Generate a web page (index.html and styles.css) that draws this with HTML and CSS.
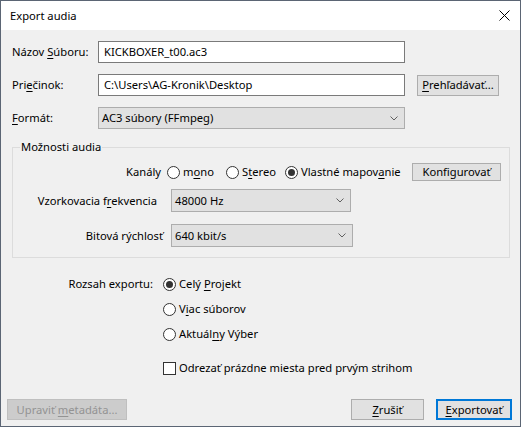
FILE: index.html
```html
<!DOCTYPE html>
<html lang="sk">
<head>
<meta charset="utf-8">
<title>Export audia</title>
<link rel="stylesheet" href="styles.css">
</head>
<body>
<div class="window">
  <div class="titlebar">
    <span class="title">Export audia</span>
    <svg class="close" width="11" height="11" viewBox="0 0 11 11"><path d="M0.5 0.5 L10.5 10.5 M10.5 0.5 L0.5 10.5" stroke="#000" stroke-width="1" fill="none"/></svg>
  </div>
  <div class="content">
    <div class="file-grid">
      <span class="lbl">Názov <u>S</u>úboru:</span>
      <div class="input">KICKBOXER_t00.ac3</div>
      <span></span>
      <span class="lbl">Pri<u>e</u>činok:</span>
      <div class="input">C:\Users\AG-Kronik\Desktop</div>
      <button class="btn"><u>P</u>rehľadávať...</button>
      <span class="lbl"><u>F</u>ormát:</span>
      <div class="select"><span>AC3 súbory (FFmpeg)</span><svg class="chev" width="8" height="5" viewBox="0 0 8 5"><path d="M0.5 0.5 L4 4 L7.5 0.5" stroke="#606060" fill="none"/></svg></div>
    </div>

    <div class="group">
      <div class="group-title">Možnosti audia</div>
      <div class="grow grow-ch">
        <span class="glbl glbl-ch">Kanály</span>
        <div class="radios">
          <span class="ritem ritem-mono"><span class="radio"></span><span>m<u>o</u>no</span></span>
          <span class="ritem ritem-stereo"><span class="radio"></span><span>S<u>t</u>ereo</span></span>
          <span class="ritem ritem-custom"><span class="radio on"></span><span>Vlastné mapov<u>a</u>nie</span></span>
          <button class="btn btn-conf">Konfigurovať</button>
        </div>
      </div>
      <div class="grow grow-rate">
        <span class="glbl glbl-rate">Vzorkovacia f<u>r</u>ekvencia</span>
        <div class="select select-rate"><span>48000 Hz</span><svg class="chev" width="8" height="5" viewBox="0 0 8 5"><path d="M0.5 0.5 L4 4 L7.5 0.5" stroke="#606060" fill="none"/></svg></div>
      </div>
      <div class="grow grow-bit">
        <span class="glbl glbl-bit">Bitová rýchlosť</span>
        <div class="select select-bit"><span>640 kbit/s</span><svg class="chev" width="8" height="5" viewBox="0 0 8 5"><path d="M0.5 0.5 L4 4 L7.5 0.5" stroke="#606060" fill="none"/></svg></div>
      </div>
    </div>

    <div class="range">
      <span class="rlbl">Rozsah exportu:</span>
      <div class="ropts">
        <span class="ritem"><span class="radio on"></span><span>Celý <u>P</u>rojekt</span></span>
        <span class="ritem"><span class="radio"></span><span>V<u>i</u>ac súborov</span></span>
        <span class="ritem"><span class="radio"></span><span>Aktuál<u>n</u>y Výber</span></span>
        <span class="ritem citem"><span class="check"></span><span>Odrezať prázdne miesta pred prvým strihom</span></span>
      </div>
    </div>
  </div>

  <div class="footer">
    <button class="btn btn-meta" disabled>Upraviť <u>m</u>etadáta...</button>
    <span class="spacer"></span>
    <button class="btn btn-cancel"><u>Z</u>rušiť</button>
    <button class="btn btn-export"><u>E</u>xportovať</button>
  </div>
</div>
</body>
</html>
```

FILE: styles.css
```css
html, body {
  margin: 0;
  padding: 0;
}

body {
  font-family: "Noto Sans", "DejaVu Sans", sans-serif;
  font-size: 11.2px;
  line-height: 16px;
  color: #000;
  background: #fff;
}

u {
  text-decoration-thickness: 1px;
  text-underline-offset: 2px;
}

.window {
  width: 521px;
  height: 427px;
  box-sizing: border-box;
  border: 1px solid #5b6574;
  background: #f0f0f0;
  display: flex;
  flex-direction: column;
}

.titlebar {
  height: 29px;
  flex: 0 0 29px;
  background: #fff;
  display: flex;
  align-items: center;
  justify-content: space-between;
  padding: 0 10px 0 9px;
}

.title {
  font-size: 11.2px;
}

.close {
  display: block;
}

.content {
  padding: 11px 10px 0 11px;
}

.file-grid {
  display: grid;
  grid-template-columns: 74px 307px 82px;
  column-gap: 12px;
  row-gap: 11px;
  align-items: center;
}

.lbl {
  white-space: nowrap;
}

.input {
  height: 22px;
  box-sizing: border-box;
  border: 1px solid #7a7a7a;
  background: #fff;
  padding: 0 5px;
  display: flex;
  align-items: center;
  white-space: nowrap;
}

.select {
  height: 22px;
  box-sizing: border-box;
  border: 1px solid #adadad;
  background: #e1e1e1;
  display: flex;
  align-items: center;
  justify-content: space-between;
  padding: 0 6px 0 3px;
  white-space: nowrap;
}

.chev {
  display: block;
}

.btn {
  height: 21px;
  box-sizing: border-box;
  border: 1px solid #adadad;
  background: #e1e1e1;
  font: inherit;
  line-height: 16px;
  color: #000;
  padding: 0;
  margin: 0;
  white-space: nowrap;
}

.group {
  margin-top: 18px;
  border: 1px solid #dcdcdc;
  padding: 0 0 10px 0;
}

.group-title {
  display: table;
  margin: -9px 0 0 7px;
  padding: 0 1px;
  background: #f0f0f0;
  line-height: 16px;
}

.grow {
  display: flex;
  align-items: center;
}

.grow-ch {
  margin-top: 8px;
  height: 18px;
}

.grow-rate {
  margin-top: 8px;
}

.grow-bit {
  margin-top: 12px;
}

.glbl {
  flex: 0 0 151px;
  box-sizing: border-box;
  text-align: right;
  white-space: nowrap;
}

.glbl-ch { padding-right: 3px; }
.glbl-rate { padding-right: 7px; }
.glbl-bit { padding-right: 1px; }

.radios {
  display: flex;
  align-items: center;
  margin-left: 3px;
}

.ritem {
  display: flex;
  align-items: center;
  gap: 3px;
  white-space: nowrap;
  height: 20px;
}

.ritem-mono { width: 59px; }
.ritem-stereo { width: 59px; }
.ritem-custom { width: 127px; }

.btn-conf {
  width: 89px;
  height: 18px;
}

.radio {
  width: 13px;
  height: 13px;
  box-sizing: border-box;
  border: 1px solid #333;
  border-radius: 50%;
  background: #fff;
  display: inline-flex;
  align-items: center;
  justify-content: center;
  flex: 0 0 13px;
}

.radio.on::after {
  content: "";
  width: 7px;
  height: 7px;
  border-radius: 50%;
  background: #333;
}

.check {
  width: 13px;
  height: 13px;
  box-sizing: border-box;
  border: 1px solid #333;
  background: #fff;
  flex: 0 0 13px;
}

.select-rate {
  width: 180px;
  height: 23px;
  margin-left: 7px;
}

.select-bit {
  width: 182px;
  height: 23px;
  margin-left: 7px;
}

.range {
  display: flex;
  align-items: flex-start;
  margin-top: 16px;
}

.rlbl {
  flex: 0 0 141px;
  text-align: right;
  line-height: 20px;
  margin-right: 10px;
  white-space: nowrap;
}

.ropts {
  display: flex;
  flex-direction: column;
  gap: 5px;
}

.citem {
  margin-top: 9px;
}

.footer {
  margin-top: auto;
  display: flex;
  align-items: center;
  padding: 0 8px 6px 6px;
}

.spacer {
  flex: 1;
}

.btn-meta {
  width: 120px;
  background: #cccccc;
  border-color: #bfbfbf;
  color: #939393;
}

.btn-cancel {
  width: 73px;
  margin-right: 12px;
}

.btn-export {
  width: 76px;
  border: 2px solid #0078d7;
}
```
